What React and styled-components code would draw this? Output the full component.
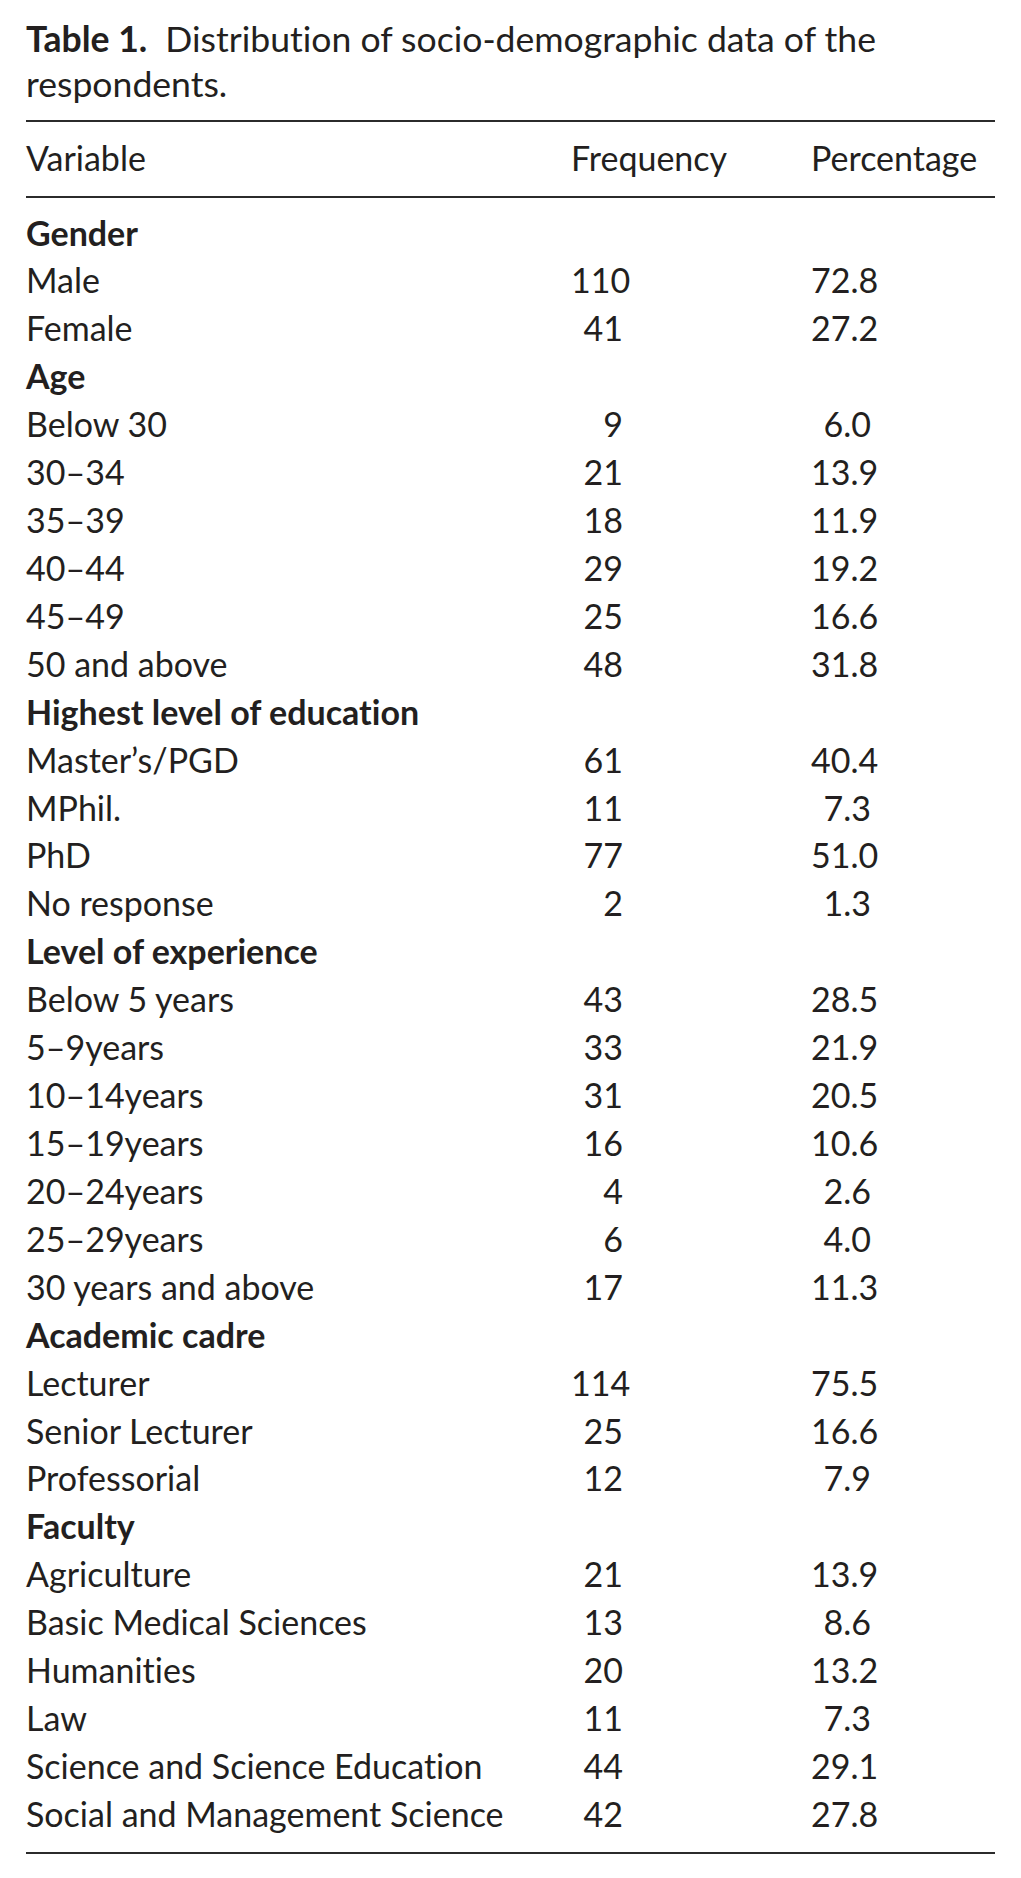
import React from 'react';
import styled, { createGlobalStyle } from 'styled-components';

const GlobalStyle = createGlobalStyle`
  body {
    margin: 0;
    background: #fff;
  }
`;

const Page = styled.div`
  width: 1021px;
  box-sizing: border-box;
  padding: 16px 26px 0;
  font-family: Lato, "Liberation Sans", sans-serif;
  font-size: 34px;
  font-variant-ligatures: none;
  color: #231f20;
`;

const Caption = styled.p`
  margin: 0 0 14px;
  font-size: 35.6px;
  line-height: 45px;
`;

const CaptionLabel = styled.b`
  font-weight: 700;
  margin-right: 9px;
`;

const Head = styled.div`
  border-top: 2px solid #2b2b2b;
  border-bottom: 2px solid #2b2b2b;
  padding: 12px 0 14px;
`;

const Body = styled.div`
  padding: 10.5px 0 14px;
  border-bottom: 2px solid #2b2b2b;
`;

const Row = styled.div`
  display: grid;
  grid-template-columns: 545px 240px 1fr;
  line-height: ${(p) => (p.$head ? '48px' : '47.92px')};
  white-space: nowrap;
`;

const Cell = styled.div`
  font-weight: ${(p) => (p.$bold ? 700 : 400)};
`;

const Num = styled.div`
  width: ${(p) => p.$w}px;
  text-align: right;
`;

const groups = [
  {
    title: 'Gender',
    rows: [
      ['Male', '110', '72.8'],
      ['Female', '41', '27.2'],
    ],
  },
  {
    title: 'Age',
    rows: [
      ['Below 30', '9', '6.0'],
      ['30–34', '21', '13.9'],
      ['35–39', '18', '11.9'],
      ['40–44', '29', '19.2'],
      ['45–49', '25', '16.6'],
      ['50 and above', '48', '31.8'],
    ],
  },
  {
    title: 'Highest level of education',
    rows: [
      ['Master’s/PGD', '61', '40.4'],
      ['MPhil.', '11', '7.3'],
      ['PhD', '77', '51.0'],
      ['No response', '2', '1.3'],
    ],
  },
  {
    title: 'Level of experience',
    rows: [
      ['Below 5 years', '43', '28.5'],
      ['5–9years', '33', '21.9'],
      ['10–14years', '31', '20.5'],
      ['15–19years', '16', '10.6'],
      ['20–24years', '4', '2.6'],
      ['25–29years', '6', '4.0'],
      ['30 years and above', '17', '11.3'],
    ],
  },
  {
    title: 'Academic cadre',
    rows: [
      ['Lecturer', '114', '75.5'],
      ['Senior Lecturer', '25', '16.6'],
      ['Professorial', '12', '7.9'],
    ],
  },
  {
    title: 'Faculty',
    rows: [
      ['Agriculture', '21', '13.9'],
      ['Basic Medical Sciences', '13', '8.6'],
      ['Humanities', '20', '13.2'],
      ['Law', '11', '7.3'],
      ['Science and Science Education', '44', '29.1'],
      ['Social and Management Science', '42', '27.8'],
    ],
  },
];

export default function App() {
  return (
    <Page>
      <GlobalStyle />
      <Caption>
        <CaptionLabel>Table 1.</CaptionLabel> Distribution of socio-demographic data of the
        <br />
        respondents.
      </Caption>
      <Head>
        <Row $head>
          <Cell>Variable</Cell>
          <Cell>Frequency</Cell>
          <Cell>Percentage</Cell>
        </Row>
      </Head>
      <Body>
        {groups.map((g) => (
          <React.Fragment key={g.title}>
            <Row>
              <Cell $bold>{g.title}</Cell>
            </Row>
            {g.rows.map(([name, freq, pct]) => (
              <Row key={name}>
                <Cell>{name}</Cell>
                <Num $w={52}>{freq}</Num>
                <Num $w={60}>{pct}</Num>
              </Row>
            ))}
          </React.Fragment>
        ))}
      </Body>
    </Page>
  );
}
